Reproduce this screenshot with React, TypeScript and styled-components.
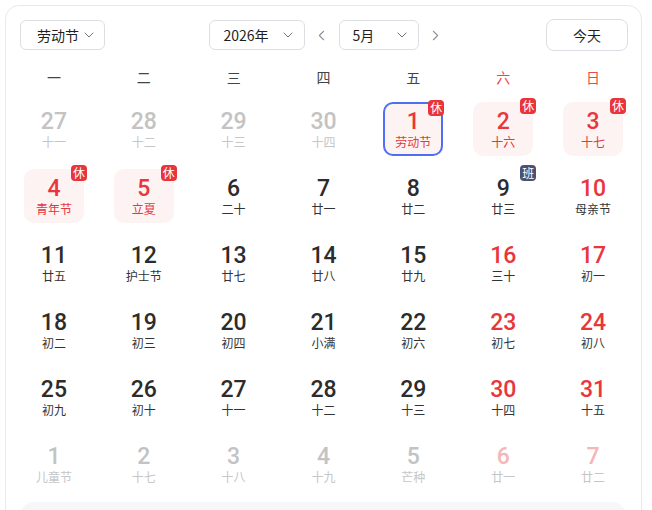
import React from "react";
import styled, { createGlobalStyle, css } from "styled-components";
import { ChevronDown, ChevronLeft, ChevronRight } from "lucide-react";

const Global = createGlobalStyle`
  html, body { margin: 0; padding: 0; background: #fff; overflow: hidden; }
  body { font-family: "Noto Sans CJK SC", "Noto Sans", sans-serif; color: #222; }
`;

const Page = styled.div`
  padding: 5px 10px 0 5px;
  height: 510px;
  box-sizing: border-box;
`;

const Card = styled.div`
  width: 637px;
  min-height: 540px;
  box-sizing: border-box;
  border: 1px solid #e8e9ed;
  border-radius: 14px;
  background: #fff;
  padding: 13px 0 0;
`;

const Header = styled.div`
  display: flex;
  align-items: center;
  justify-content: space-between;
  padding: 0 13px 0 14px;
  height: 32px;
`;

const Group = styled.div`
  display: flex;
  align-items: center;
  margin-left: 10px;
`;

const Select = styled.div<{ $w: number; $pl: number; $pr: number }>`
  width: ${(p) => p.$w}px;
  height: 30px;
  box-sizing: border-box;
  border: 1px solid #dcdee4;
  border-radius: 6px;
  display: flex;
  align-items: center;
  justify-content: space-between;
  padding: 0 ${(p) => p.$pr}px 0 ${(p) => p.$pl}px;
  font-size: 14px;
  color: #1f1f1f;
  svg { color: #6f7480; flex: none; }
`;

const Arrow = styled.div`
  width: 18px;
  margin: 0 8px;
  display: flex;
  align-items: center;
  justify-content: center;
  color: #8b909a;
`;

const TodayBtn = styled.div`
  width: 82px;
  height: 32px;
  box-sizing: border-box;
  border: 1px solid #dcdee4;
  border-radius: 8px;
  display: flex;
  align-items: center;
  justify-content: center;
  font-size: 14px;
  color: #1f1f1f;
`;

const Weekdays = styled.div`
  display: grid;
  grid-template-columns: repeat(7, 1fr);
  padding: 0 3px;
  margin-top: 8px;
  height: 36px;
  align-items: center;
`;

const Weekday = styled.div<{ $red?: boolean }>`
  text-align: center;
  font-size: 14px;
  color: ${(p) => (p.$red ? "#f0474b" : "#444")};
`;

const Grid = styled.div`
  display: grid;
  grid-template-columns: repeat(7, 1fr);
  grid-auto-rows: 67px;
  padding: 0 3px;
`;

const Slot = styled.div`
  display: flex;
  align-items: center;
  justify-content: center;
`;

type Tone = "normal" | "red" | "faded" | "fadedRed";

const numColor: Record<Tone, string> = {
  normal: "#2c2c2c",
  red: "#e8363c",
  faded: "#c3c3c3",
  fadedRed: "#f6b6b6",
};

const Cell = styled.div<{ $hl?: boolean; $sel?: boolean }>`
  position: relative;
  width: 60px;
  height: 54px;
  box-sizing: border-box;
  border-radius: 10px;
  display: flex;
  flex-direction: column;
  align-items: center;
  padding-top: 7px;
  ${(p) => p.$hl && css`background: #fdf3f3;`}
  ${(p) =>
    p.$sel &&
    css`
      border: 2px solid #4f6ef3;
      padding-top: 5px;
    `}
`;

const Num = styled.div<{ $tone: Tone }>`
  font-family: Roboto, "Noto Sans", sans-serif;
  font-size: 23px;
  font-weight: 500;
  line-height: 26px;
  color: ${(p) => numColor[p.$tone]};
`;

const Lunar = styled.div<{ $color: string }>`
  font-size: 12px;
  line-height: 14px;
  color: ${(p) => p.$color};
`;

const Badge = styled.div<{ $work?: boolean }>`
  position: absolute;
  top: -4px;
  right: -3px;
  width: 16px;
  height: 16px;
  border-radius: 4px;
  background: ${(p) => (p.$work ? "#4b5270" : "#e8343a")};
  color: #fff;
  font-size: 12px;
  line-height: 16px;
  text-align: center;
`;

const Footer = styled.div`
  margin: 5px 16px 0 15px;
  height: 40px;
  border-radius: 12px;
  background: #f7f7f9;
`;

type Day = {
  n: number;
  l: string;
  tone: Tone;
  lc?: string;
  hl?: boolean;
  sel?: boolean;
  badge?: "休" | "班";
};

const G = "#c6c6c6";
const D = "#333";
const R = "#e8363c";

const days: Day[] = [
  { n: 27, l: "十一", tone: "faded", lc: G },
  { n: 28, l: "十二", tone: "faded", lc: G },
  { n: 29, l: "十三", tone: "faded", lc: G },
  { n: 30, l: "十四", tone: "faded", lc: G },
  { n: 1, l: "劳动节", tone: "red", lc: R, hl: true, sel: true, badge: "休" },
  { n: 2, l: "十六", tone: "red", lc: R, hl: true, badge: "休" },
  { n: 3, l: "十七", tone: "red", lc: R, hl: true, badge: "休" },
  { n: 4, l: "青年节", tone: "red", lc: R, hl: true, badge: "休" },
  { n: 5, l: "立夏", tone: "red", lc: R, hl: true, badge: "休" },
  { n: 6, l: "二十", tone: "normal" },
  { n: 7, l: "廿一", tone: "normal" },
  { n: 8, l: "廿二", tone: "normal" },
  { n: 9, l: "廿三", tone: "normal", badge: "班" },
  { n: 10, l: "母亲节", tone: "red" },
  { n: 11, l: "廿五", tone: "normal" },
  { n: 12, l: "护士节", tone: "normal" },
  { n: 13, l: "廿七", tone: "normal" },
  { n: 14, l: "廿八", tone: "normal" },
  { n: 15, l: "廿九", tone: "normal" },
  { n: 16, l: "三十", tone: "red" },
  { n: 17, l: "初一", tone: "red" },
  { n: 18, l: "初二", tone: "normal" },
  { n: 19, l: "初三", tone: "normal" },
  { n: 20, l: "初四", tone: "normal" },
  { n: 21, l: "小满", tone: "normal" },
  { n: 22, l: "初六", tone: "normal" },
  { n: 23, l: "初七", tone: "red" },
  { n: 24, l: "初八", tone: "red" },
  { n: 25, l: "初九", tone: "normal" },
  { n: 26, l: "初十", tone: "normal" },
  { n: 27, l: "十一", tone: "normal" },
  { n: 28, l: "十二", tone: "normal" },
  { n: 29, l: "十三", tone: "normal" },
  { n: 30, l: "十四", tone: "red" },
  { n: 31, l: "十五", tone: "red" },
  { n: 1, l: "儿童节", tone: "faded", lc: G },
  { n: 2, l: "十七", tone: "faded", lc: G },
  { n: 3, l: "十八", tone: "faded", lc: G },
  { n: 4, l: "十九", tone: "faded", lc: G },
  { n: 5, l: "芒种", tone: "faded", lc: G },
  { n: 6, l: "廿一", tone: "fadedRed", lc: G },
  { n: 7, l: "廿二", tone: "fadedRed", lc: G },
];

const weekdays = ["一", "二", "三", "四", "五", "六", "日"];

export default function App() {
  return (
    <>
      <Global />
      <Page>
        <Card>
          <Header>
            <Select $w={85} $pl={16} $pr={7}>
              劳动节
              <ChevronDown size={16} strokeWidth={1.5} />
            </Select>
            <Group>
              <Select $w={96} $pl={14} $pr={8}>
                2026年
                <ChevronDown size={16} strokeWidth={1.5} />
              </Select>
              <Arrow>
                <ChevronLeft size={17} strokeWidth={1.5} />
              </Arrow>
              <Select $w={80} $pl={13} $pr={8}>
                5月
                <ChevronDown size={16} strokeWidth={1.5} />
              </Select>
              <Arrow>
                <ChevronRight size={17} strokeWidth={1.5} />
              </Arrow>
            </Group>
            <TodayBtn>今天</TodayBtn>
          </Header>
          <Weekdays>
            {weekdays.map((w, i) => (
              <Weekday key={w} $red={i >= 5}>
                {w}
              </Weekday>
            ))}
          </Weekdays>
          <Grid>
            {days.map((d, i) => (
              <Slot key={i}>
                <Cell $hl={d.hl} $sel={d.sel}>
                  <Num $tone={d.tone}>{d.n}</Num>
                  <Lunar $color={d.lc ?? D}>{d.l}</Lunar>
                  {d.badge && <Badge $work={d.badge === "班"}>{d.badge}</Badge>}
                </Cell>
              </Slot>
            ))}
          </Grid>
          <Footer />
        </Card>
      </Page>
    </>
  );
}
